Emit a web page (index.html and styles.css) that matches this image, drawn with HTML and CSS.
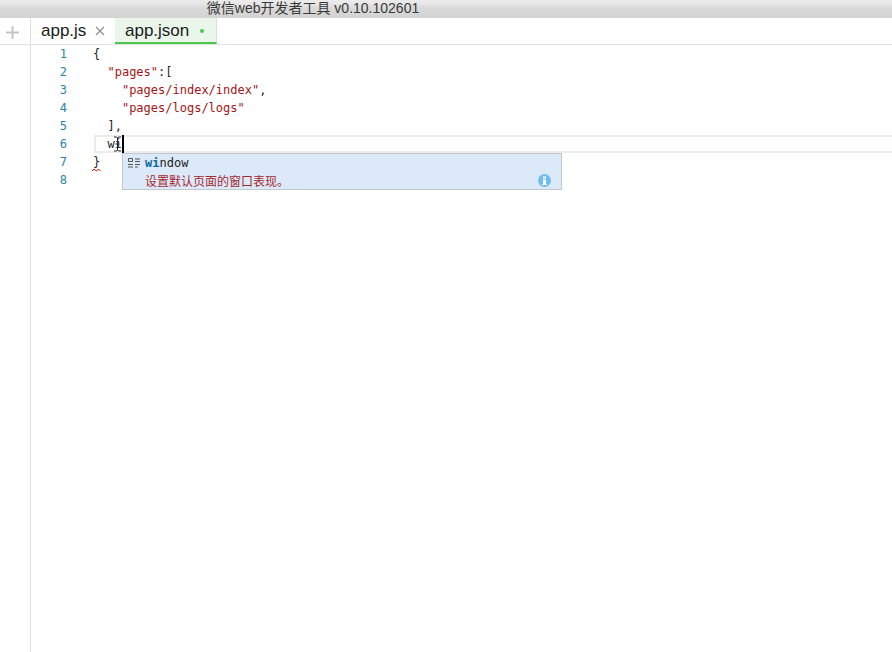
FILE: index.html
```html
<!DOCTYPE html>
<html lang="zh">
<head>
<meta charset="utf-8">
<title>微信web开发者工具</title>
<link rel="stylesheet" href="styles.css">
</head>
<body>
<header class="titlebar">微信web开发者工具 v0.10.102601</header>
<nav class="tabbar">
  <div class="add">
    <svg width="13" height="13" viewBox="0 0 13 13"><path d="M6.5 0v13M0 6.5h13" stroke="#c4c4c4" stroke-width="2" fill="none"/></svg>
  </div>
  <div class="tab">app.js
    <svg class="close" width="10" height="10" viewBox="0 0 10 10"><path d="M1 1l8 8M9 1l-8 8" stroke="#8f8f8f" stroke-width="1.2" fill="none"/></svg>
  </div>
  <div class="tab active">app.json<span class="dot"></span></div>
</nav>
<main class="workspace">
  <aside class="side"></aside>
  <section class="editor">
    <div class="row"><span class="num">1</span><span class="code">{</span></div>
    <div class="row"><span class="num">2</span><span class="code">  <span class="str">"pages"</span>:[</span></div>
    <div class="row"><span class="num">3</span><span class="code">    <span class="str">"pages/index/index"</span>,</span></div>
    <div class="row"><span class="num">4</span><span class="code">    <span class="str">"pages/logs/logs"</span></span></div>
    <div class="row"><span class="num">5</span><span class="code">  ],</span></div>
    <div class="row current"><span class="num">6</span><span class="code">  wi<span class="caret"></span><span class="ibeam"><svg width="9" height="16" viewBox="0 0 9 16"><path d="M1 1h2.500l1 1 1-1H8M4.500 2v12M1 15h2.500l1-1 1 1H8M2.500 8h4" stroke="#222" stroke-width="1" fill="none"/></svg></span></span></div>
    <div class="row"><span class="num">7</span><span class="code">}<svg class="squiggle" width="9" height="4" viewBox="0 0 9 4"><path d="M0 3l2-2 2.500 2 2-2 2 2" stroke="#e51400" stroke-width="1" fill="none"/></svg></span></div>
    <div class="row"><span class="num">8</span><span class="code"></span></div>
    <div class="suggest">
      <div class="suggest-main">
        <svg class="kind" width="12" height="10" viewBox="0 0 12 10"><path d="M.5.500h4v3h-4zM7 1h5M7 3.500h5M0 6.500h5M0 9h5M7 6.500h5M7 9h3" stroke="#555" stroke-width="1" fill="none"/></svg>
        <span class="label"><b>wi</b>ndow</span>
      </div>
      <div class="suggest-doc">
        <span>设置默认页面的窗口表现。</span>
        <svg class="info" width="13" height="13" viewBox="0 0 13 13"><circle cx="6.500" cy="6.500" r="6.500" fill="#6fbdee"/><path d="M5 2.500h3v2H5zM5 5.500h3V10h1v1H4v-1h1z" fill="#fff"/></svg>
      </div>
    </div>
  </section>
</main>
</body>
</html>
```
FILE: styles.css
```css
* { box-sizing: border-box; }
html, body { margin: 0; height: 100%; }
body {
  width: 892px;
  height: 652px;
  overflow: hidden;
  background: #fff;
  display: flex;
  flex-direction: column;
  font-family: "Liberation Sans", "Noto Sans CJK SC", sans-serif;
}
.titlebar {
  height: 18px;
  flex: none;
  background: linear-gradient(#ebebeb 0, #e8e8e8 3px, #d8d8d8 9px, #d3d3d3 100%);
  color: #3a3a3a;
  font-size: 14px;
  line-height: 16px;
  text-align: center;
  padding-right: 266px;
  overflow: hidden;
}
.tabbar {
  height: 27px;
  flex: none;
  display: flex;
  border-bottom: 1px solid #e2e2e2;
}
.add {
  width: 31px;
  flex: none;
  border-right: 1px solid #dcdcdc;
  display: flex;
  align-items: center;
  justify-content: center;
  padding-top: 2px;
  padding-right: 5px;
}
.tab {
  display: flex;
  align-items: center;
  font-size: 17px;
  color: #1b1b1b;
  height: 26px;
  padding: 0 0 1px 10px;
  width: 84px;
}
.close { margin-left: 9px; }
.tab.active {
  width: 102px;
  background: #eaf6ea;
  border-bottom: 2px solid #4cc84c;
  border-right: 1px solid #dedede;
  padding: 1px 0 0 10px;
}
.dot {
  width: 4px;
  height: 4px;
  margin-left: 11px;
  border-radius: 50%;
  background: #4cc84c;
}
.workspace { flex: 1; display: flex; min-height: 0; }
.side { width: 31px; flex: none; border-right: 1px solid #dcdcdc; }
.editor {
  flex: 1;
  position: relative;
  font-family: "DejaVu Sans Mono", "Noto Sans CJK SC", monospace;
  font-size: 12px;
}
.row { height: 18px; line-height: 18px; display: flex; white-space: pre; }
.num { width: 36px; flex: none; text-align: right; color: #2a85a8; }
.code { margin-left: 26px; color: #1e1e1e; position: relative; }
.str { color: #a31515; }
.current { position: relative; }
.current::before {
  content: "";
  box-sizing: border-box;
  position: absolute;
  left: 63px;
  right: 0;
  top: 0;
  height: 18px;
  border: 2px solid #ececec;
  border-right: 0;
}
.caret {
  position: absolute;
  left: 29px;
  top: 0;
  width: 2px;
  height: 18px;
  background: #000;
}
.ibeam { position: absolute; left: 20px; top: 1px; line-height: 0; }
.squiggle { position: absolute; left: -1px; top: 15px; }
.suggest {
  position: absolute;
  left: 91px;
  top: 108px;
  width: 440px;
  height: 37px;
  background: #dce9f9;
  border: 1px solid #c3c8cf;
}
.suggest-main {
  display: flex;
  align-items: center;
  height: 17px;
  padding-left: 5px;
  color: #222;
}
.kind { flex: none; }
.label { margin-left: 5px; }
.label b { color: #0f6a9c; font-weight: bold; }
.suggest-doc {
  display: flex;
  justify-content: space-between;
  align-items: center;
  height: 18px;
  padding: 0 10px 0 22px;
  font-size: 12px;
  color: #a52a2f;
  font-family: "Noto Sans CJK SC", sans-serif;
}
```
